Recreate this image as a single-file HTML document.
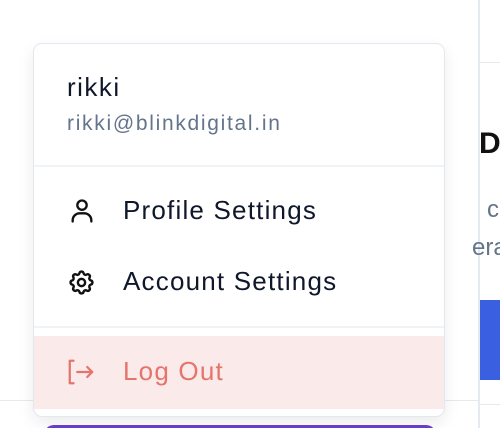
<!DOCTYPE html>
<html><head><style>
*{margin:0;padding:0;box-sizing:border-box}
html,body{width:500px;height:428px;overflow:hidden}
body{background:#fff;position:relative;font-family:"Liberation Sans",sans-serif}
.abs{position:absolute}
.menu{left:33px;top:43px;width:412px;height:374px;background:#fff;border:1px solid #e2e8f0;border-radius:9px;box-shadow:0 6px 16px rgba(0,0,0,0.08);overflow:hidden}
.t{position:absolute;white-space:nowrap}
</style></head><body>
<div class="abs" style="left:478px;top:0;width:2px;height:428px;background:#e5e9f0"></div>
<div class="abs" style="left:480px;top:62px;width:20px;height:1px;background:#e5e9f0"></div>
<div class="abs" style="left:0;top:400px;width:478px;height:1px;background:#e5e9f0"></div>
<div class="abs" style="left:480px;top:404px;width:20px;height:1px;background:#e5e9f0"></div>
<div class="t" style="left:479px;top:127px;font-size:30px;font-weight:bold;color:#111">D</div>
<div class="t" style="left:487px;top:196px;font-size:24px;color:#64748b">c</div>
<div class="t" style="left:472px;top:234px;font-size:24px;color:#64748b">era</div>
<div class="abs" style="left:480px;top:300px;width:20px;height:80px;background:#3a5fe0"></div>
<div class="abs" style="left:44px;top:425px;width:392px;height:20px;background:#6b3fcf;border-radius:10px"></div>
<div class="abs menu">
 <div class="t" style="left:33px;top:28px;font-size:26px;letter-spacing:1.5px;font-weight:500;color:#0f172a">rikki</div>
 <div class="t" style="left:33px;top:68px;font-size:21px;letter-spacing:1.7px;color:#64748b">rikki@blinkdigital.in</div>
 <div class="abs" style="left:0;top:121px;width:100%;height:2px;background:#f1f3f7"></div>
 <svg class="abs" style="left:34px;top:153px" width="28" height="28" viewBox="0 0 24 24" fill="none" stroke="#111" stroke-width="2" stroke-linecap="round"><circle cx="12" cy="7" r="4"/><path d="M4 21v-1a6 6 0 0 1 6-6h4a6 6 0 0 1 6 6v1"/></svg>
 <div class="t" style="left:89px;top:151px;font-size:26px;letter-spacing:1.2px;color:#0f172a">Profile Settings</div>
 <svg class="abs" style="left:33px;top:224px" width="29" height="29" viewBox="0 0 24 24" fill="none" stroke="#111" stroke-width="2" stroke-linejoin="round"><path d="M10.3 4.3c.4-1.8 3-1.8 3.4 0a1.7 1.7 0 0 0 2.6 1.1c1.5-.9 3.3.8 2.4 2.4a1.7 1.7 0 0 0 1 2.5c1.8.4 1.8 3 0 3.4a1.7 1.7 0 0 0-1 2.6c.9 1.5-.8 3.300-2.4 2.4a1.7 1.7 0 0 0-2.6 1c-.4 1.8-3 1.8-3.4 0a1.7 1.7 0 0 0-2.6-1c-1.5.9-3.3-.8-2.4-2.4a1.7 1.7 0 0 0-1-2.6c-1.8-.4-1.8-3 0-3.4a1.7 1.7 0 0 0 1-2.5c-.9-1.6.8-3.3 2.4-2.4a1.7 1.7 0 0 0 2.6-1.100z"/><circle cx="12" cy="12" r="3"/></svg>
 <div class="t" style="left:89px;top:222px;font-size:26px;letter-spacing:1.2px;color:#0f172a">Account Settings</div>
 <div class="abs" style="left:0;top:282px;width:100%;height:2px;background:#f1f3f7"></div>
 <div class="abs" style="left:0;top:292px;width:100%;height:73px;background:#faeaea"></div>
 <svg class="abs" style="left:32px;top:313px" width="30" height="30" viewBox="0 0 24 24" fill="none" stroke="#e5746c" stroke-width="1.8" stroke-linecap="round" stroke-linejoin="round"><path d="M6 3H3v18h3"/><path d="M9 12h12M17 8l4 4-4 4"/></svg>
 <div class="t" style="left:89px;top:312px;font-size:26px;letter-spacing:1.2px;color:#e5746c">Log Out</div>
</div>
</body></html>
